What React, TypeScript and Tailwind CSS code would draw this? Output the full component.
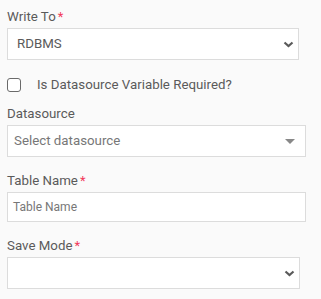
import React from "react";

function Chevron() {
  return (
    <svg width="11" height="7" viewBox="0 0 11 7" className="shrink-0">
      <path d="M1.5 1.5 L5.5 5 L9.5 1.5" fill="none" stroke="#5a5a5a" strokeWidth="2.2" strokeLinejoin="miter" />
    </svg>
  );
}

function Caret() {
  return (
    <svg width="10" height="5" viewBox="0 0 10 5" className="shrink-0">
      <path d="M0 0 L10 0 L5 5 Z" fill="#888" />
    </svg>
  );
}

function Label({ text, required }: { text: string; required?: boolean }) {
  return (
    <div className="h-5 leading-5 text-[13.3px] text-[#5a5a5a] mb-[1px] flex items-start">
      <span>{text}</span>
      {required && <span className="text-[#f23a5a] ml-[2px] text-[13px] leading-[19px]">*</span>}
    </div>
  );
}

export default function App() {
  return (
    <div
      className="w-[321px] h-[299px] bg-[#fafafa] pl-[7px] pt-[7px]"
      style={{ fontFamily: "Roboto, 'Liberation Sans', Arial, sans-serif" }}
    >
      <Label text="Write To" required />
      <div className="w-[292px] h-[32px] bg-white border border-[#dcdcdc] flex items-center justify-between pl-[9px] pr-[4px]">
        <span className="text-[13.3px] text-[#5a5a5a]">RDBMS</span>
        <Chevron />
      </div>

      <div className="mt-[15px] h-5 flex items-center">
        <div className="w-[14px] h-[14px] rounded-[3px] border border-[#6a6a6a] bg-white" />
        <span className="ml-[16px] text-[13.3px] text-[#5a5a5a]">Is Datasource Variable Required?</span>
      </div>

      <div className="mt-[9px]">
        <Label text="Datasource" />
        <div className="w-[299px] h-[32px] bg-white border border-[#dcdcdc] flex items-center justify-between pl-[6px] pr-[10px]">
          <span className="text-[13.3px] text-[#777]">Select datasource</span>
          <Caret />
        </div>
      </div>

      <div className="mt-[14px]">
        <Label text="Table Name" required />
        <div className="w-[299px] h-[30px] bg-white border border-[#dcdcdc] flex items-center pl-[5px]">
          <span className="text-[12px] text-[#777]">Table Name</span>
        </div>
      </div>

      <div className="mt-[14px]">
        <Label text="Save Mode" required />
        <div className="w-[293px] h-[32px] bg-white border border-[#dcdcdc] flex items-center justify-end pr-[4px]">
          <Chevron />
        </div>
      </div>
    </div>
  );
}
